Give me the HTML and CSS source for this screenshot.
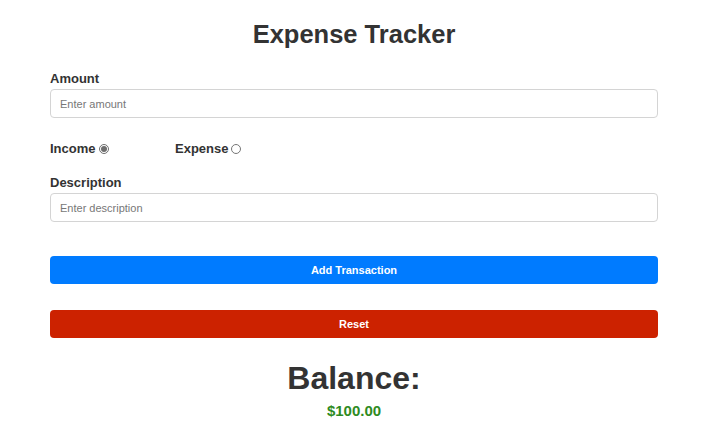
FILE: index.html
```html
<!DOCTYPE html>
<html>
<head>
<meta charset="utf-8">
<link rel="stylesheet" href="styles.css">
</head>
<body>
<div class="container">
  <h1 class="title">Expense Tracker</h1>
  <div class="field">
    <label class="label">Amount</label>
    <input class="input" type="text" placeholder="Enter amount">
  </div>
  <div class="radios">
    <label class="radio-label">Income <input type="radio" name="t" checked></label>
    <label class="radio-label">Expense <input type="radio" name="t"></label>
  </div>
  <div class="field">
    <label class="label">Description</label>
    <input class="input" type="text" placeholder="Enter description">
  </div>
  <button class="btn btn-add">Add Transaction</button>
  <button class="btn btn-reset">Reset</button>
  <h2 class="balance">Balance:</h2>
  <div class="amount">$100.00</div>
</div>
</body>
</html>
```

FILE: styles.css
```css
* { box-sizing: border-box; }
body {
  margin: 0;
  font-family: "Liberation Sans", Arial, sans-serif;
  color: #333;
  background: #fff;
}
.container {
  width: 608px;
  margin-left: 50px;
  padding-top: 19px;
}
.title {
  font-size: 25.5px;
  font-weight: bold;
  text-align: center;
  margin: 0 0 22px;
  line-height: 30px;
}
.field {
  display: flex;
  flex-direction: column;
}
.label {
  font-size: 13px;
  font-weight: bold;
  line-height: 16px;
  margin-bottom: 2px;
}
.input {
  height: 29px;
  border: 1px solid #d4d4d4;
  border-radius: 4px;
  padding: 0 9px;
  font-family: inherit;
  font-size: 11px;
  color: #333;
}
.input::placeholder { color: #777; }
.radios {
  display: flex;
  margin: 23px 0 18px;
}
.radio-label {
  width: 125px;
  font-size: 13px;
  font-weight: bold;
  display: flex;
  align-items: center;
  line-height: 16px;
}
.radio-label input {
  margin: 0 0 0 3px;
  width: 10px;
  height: 10px;
  accent-color: #6e6e6e;
}
.btn {
  display: block;
  width: 100%;
  height: 28px;
  border: none;
  border-radius: 4px;
  color: #fff;
  font-family: inherit;
  font-weight: bold;
  font-size: 11px;
}
.btn-add {
  background: #007bff;
  margin-top: 34px;
}
.btn-reset {
  background: #cc2200;
  margin-top: 26px;
}
.balance {
  text-align: center;
  font-size: 32px;
  font-weight: bold;
  margin: 21px 0 0;
  line-height: 38px;
}
.amount {
  text-align: center;
  color: #2e8b22;
  font-weight: bold;
  font-size: 15px;
  margin-top: 5px;
}
```
